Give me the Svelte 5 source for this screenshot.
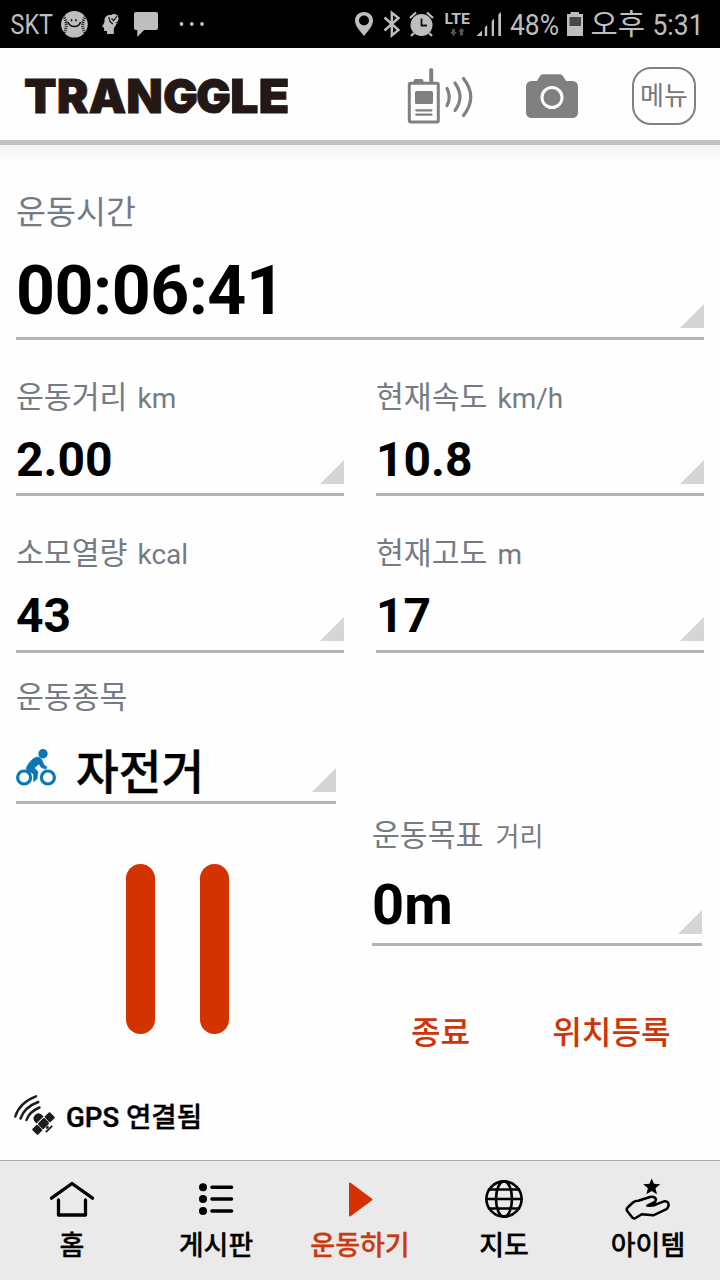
<script lang="ts">
	interface Metric {
		label: string;
		unit?: string;
		value: string;
		kind: string;
	}

	const time: Metric = { label: '운동시간', value: '00:06:41', kind: 'time' };
	const metrics: Metric[] = [
		{ label: '운동거리', unit: 'km', value: '2.00', kind: 'upper' },
		{ label: '현재속도', unit: 'km/h', value: '10.8', kind: 'upper' },
		{ label: '소모열량', unit: 'kcal', value: '43', kind: 'lower' },
		{ label: '현재고도', unit: 'm', value: '17', kind: 'lower' }
	];
	const sport: Metric = { label: '운동종목', value: '자전거', kind: 'sport' };
	const goal: Metric = { label: '운동목표', unit: '거리', value: '0m', kind: 'goal' };

	const tabs = [
		{ id: 'home', label: '홈' },
		{ id: 'board', label: '게시판' },
		{ id: 'workout', label: '운동하기' },
		{ id: 'map', label: '지도' },
		{ id: 'items', label: '아이템' }
	];
	let active = $state('workout');
	let paused = $state(false);
</script>

{#snippet metric(m: Metric)}
	<div class="metric {m.kind}">
		<div class="label">
			{m.label}{#if m.unit}<small>{m.unit}</small>{/if}
		</div>
		<div class="value-row">
			{#if m.kind === 'sport'}
				<svg class="bike" viewBox="0 0 40 40" width="40" height="40" fill="none" stroke="#0b78b5">
					<circle cx="8.1" cy="28.5" r="6.5" stroke-width="3.2" />
					<circle cx="31.9" cy="28.5" r="6.5" stroke-width="3.2" />
					<circle cx="27" cy="4.7" r="4.7" fill="#0b78b5" stroke="none" />
					<path d="M10 19.3C12.5 14 16 9.5 20 8.2C23.5 7.6 26 9.5 26.4 12L28.3 16.3L31 17.8L30 20.3L25.2 18.6L23 15L18.4 19L22 22.4L21 30L17.6 32.8L17.4 25L11.2 21.4Z" fill="#0b78b5" stroke="#0b78b5" stroke-width="0.5" />
				</svg>
			{/if}
			<strong>{m.value}</strong>
			<i class="corner"></i>
		</div>
	</div>
{/snippet}

<div class="screen">
	<div class="status">
		<svg viewBox="0 0 57 48" width="57" height="48">
			<text x="10.5" y="34" font-size="28" textLength="42.5" lengthAdjust="spacingAndGlyphs">SKT</text>
		</svg>
		<svg viewBox="57 0 36 48" width="36" height="48">
			<circle cx="74.4" cy="24.3" r="13.3" />
			<path d="M63.2 16Q69 24 64 33M85.8 16Q80 24 85 33" fill="none" stroke="#111" stroke-width="3" stroke-dasharray="1 1.1" />
			<path d="M68 22Q69.5 26.5 74.4 26.5Q79.3 26.5 80.5 22M71.5 19.3v2M76 19.3v2" fill="none" stroke="#111" stroke-width="1.6" />
		</svg>
		<svg viewBox="93 0 34 48" width="34" height="48">
			<path d="M102 27L104.5 22C104 17 107 14.5 111 15L114 23L117 23C116 26 114.2 26.5 113.8 29V34H107V31H104.2L104 27.5Z" />
			<circle cx="114" cy="18.5" r="4.6" />
			<path d="M109 17Q109 22 113 24M111.5 18.5L113.6 20.5L117.2 16" fill="none" stroke="#111" stroke-width="1.2" />
		</svg>
		<svg viewBox="127 0 44 48" width="44" height="48">
			<path d="M136 12H156Q158 12 158 14V28Q158 30 156 30H144L137.3 37V30H136Q134 30 134 28V14Q134 12 136 12Z" />
		</svg>
		<svg viewBox="171 0 40 48" width="40" height="48">
			<circle cx="181.5" cy="24" r="1.9" />
			<circle cx="191.8" cy="24" r="1.9" />
			<circle cx="202" cy="24" r="1.9" />
		</svg>
		<svg class="status-right" viewBox="345 0 33 48" width="33" height="48">
			<path fill-rule="evenodd" d="M364 12C369.5 12 373 16 373 20.5C373 26 368 31 364 36C360 31 355 26 355 20.5C355 16 358.5 12 364 12ZM364 15.5A5 5 0 1 0 364 25.5A5 5 0 1 0 364 15.5Z" />
		</svg>
		<svg viewBox="378 0 27 48" width="27" height="48">
			<path d="M384.5 17.5L398.5 30L391.8 35.5V12.8L398.5 18L384.5 30.5" fill="none" stroke="#bebebe" stroke-width="2.4" />
		</svg>
		<svg viewBox="405 0 34 48" width="34" height="48">
			<circle cx="421.5" cy="25" r="11" />
			<path d="M410 18L416 12.5M433 18L427 12.5M414 33L411 36M429 33L432 36" fill="none" stroke="#bebebe" stroke-width="2.3" />
			<path d="M421.5 18.5V25.5H427" fill="none" stroke="#111" stroke-width="1.8" />
		</svg>
		<svg viewBox="439 0 34 48" width="34" height="48">
			<text x="444.5" y="24.3" font-size="15.5" font-weight="700" textLength="25.5" lengthAdjust="spacingAndGlyphs">LTE</text>
			<path d="M452 29h3v3h1.7L453.5 36L450.3 32H452ZM460 35.5h3v-4h1.7L461.5 28L458.3 31.5H460Z" fill="#555" />
		</svg>
		<svg viewBox="473 0 34 48" width="34" height="48">
			<path d="M476.5 36L482 30.5V36ZM484.8 27.2L487.2 25V36H484.8ZM491.7 21L494 18.5V36H491.7ZM498.3 14.5L501 12V36H498.3Z" />
		</svg>
		<svg viewBox="507 0 55 48" width="55" height="48">
			<text x="510" y="34.8" font-size="29.5" textLength="49" lengthAdjust="spacingAndGlyphs">48%</text>
		</svg>
		<svg viewBox="562 0 26 48" width="26" height="48">
			<path d="M570.5 12H579V14H583V36H567V14H570.5Z" />
			<path d="M569.5 17H581V26H569.5Z" fill="#484848" />
		</svg>
		<svg viewBox="588 0 60 48" width="60" height="48">
			<text x="590.5" y="35" font-size="29" textLength="54.5" lengthAdjust="spacingAndGlyphs">오후</text>
		</svg>
		<svg viewBox="648 0 72 48" width="72" height="48">
			<text x="652.5" y="34.8" font-size="29.5" textLength="51" lengthAdjust="spacingAndGlyphs">5:31</text>
		</svg>
	</div>

	<header>
		<svg class="logo" viewBox="0 0 290 92" width="290" height="92" aria-label="TRANGGLE">
			<text y="65" font-size="47" lengthAdjust="spacingAndGlyphs" x="24" textLength="139">TRAN</text>
			<text y="65" font-size="47" lengthAdjust="spacingAndGlyphs" x="163" textLength="35">G</text>
			<path class="notch" d="M183.5 68L199 52V68Z" />
			<text y="65" font-size="47" lengthAdjust="spacingAndGlyphs" x="196" textLength="35">G</text>
			<path class="notch" d="M216.5 68L232 52V68Z" />
			<text y="65" font-size="47" lengthAdjust="spacingAndGlyphs" x="230" textLength="59.5">LE</text>
		</svg>
		<button aria-label="무전기">
			<svg viewBox="404 62 72 64" width="72" height="64" fill="none" stroke="#808080" stroke-linecap="round">
				<rect x="409.3" y="83.3" width="29" height="38.8" rx="1.5" stroke-width="3" />
				<path d="M415.5 81H421.5M431.2 70V82" stroke-width="4" />
				<rect x="415" y="91" width="18" height="13" rx="1.5" fill="#808080" stroke="none" />
				<path d="M416.3 110.3H431.5M416.3 114.7H431.5" stroke-width="2.2" />
				<path d="M447 88.5Q451.5 97 447 105.5M455 83Q465 97 455 110.5M463.5 78.5Q478 97 463.5 115.5" stroke-width="3.2" />
			</svg>
		</button>
		<button aria-label="카메라">
			<svg viewBox="526 62 52 64" width="52" height="64">
				<path d="M532 81H537L540 76Q541 74.3 543 74.3H560Q562 74.3 563 76L566 81H572Q578 81 578 87V112Q578 118 572 118H532Q526 118 526 112V87Q526 81 532 81Z" fill="#808080" />
				<circle cx="552" cy="97.5" r="10" fill="none" stroke="#fff" stroke-width="3" />
			</svg>
		</button>
		<button class="menu">메뉴</button>
	</header>

	<main>
		{@render metric(time)}
		<div class="grid">
			{#each metrics as m (m.label)}
				{@render metric(m)}
			{/each}
		</div>

		<div class="bottom">
			<div>
				{@render metric(sport)}
				<button class="pause" aria-label="일시정지" onclick={() => (paused = !paused)}>
					<i></i>
					<i></i>
				</button>
			</div>
			<div class="side">
				{@render metric(goal)}
				<div class="actions">
					<button>종료</button>
					<button>위치등록</button>
				</div>
			</div>
		</div>

		<div class="gps">
			<svg viewBox="0 0 40 40" width="40" height="40" fill="none" stroke="#1c1c1c" stroke-linecap="round">
				<path d="M1.3 21.5Q5.5 7.5 22 1.3M6.5 23.5Q10.5 12 24.3 7M12.5 25Q15 17 25.5 12.5" stroke-width="2.5" />
				<g transform="rotate(-45 29.5 28.5)" fill="#1c1c1c" stroke="none">
					<rect x="25" y="24.5" width="9" height="8" rx="1.5" />
					<rect x="17" y="24.5" width="7.4" height="8" rx="1" />
					<rect x="34.6" y="24.5" width="7.4" height="8" rx="1" />
					<rect x="28" y="33" width="3" height="2" />
					<rect x="25" y="35.4" width="9" height="1.8" />
					<path d="M24.5 23.5Q24 16.5 29.5 16.5Q35 16.5 34.5 23.5Z" />
				</g>
			</svg>
			<span>GPS 연결됨</span>
		</div>
	</main>

	<nav>
		{#each tabs as tab (tab.id)}
			<button class:active={active === tab.id} onclick={() => (active = tab.id)}>
				<svg viewBox="0 0 48 44" width="48" height="44" fill="none" stroke="currentColor" stroke-linecap="round">
					{#if tab.id === 'home'}
						<path d="M3.5 18.2L24 3.5L44.5 18.2M10.5 20V35H37.5V20" stroke-width="3.3" stroke-linejoin="round" />
					{:else if tab.id === 'board'}
						<path d="M20 7.3H39.5M20 19H39.5M20 31H39.5" stroke-width="3.6" />
						<g fill="currentColor" stroke="none">
							<circle cx="11" cy="7.3" r="4" />
							<circle cx="11" cy="19" r="4" />
							<circle cx="11" cy="31" r="4" />
						</g>
					{:else if tab.id === 'workout'}
						<path d="M14 3.5L35.5 19.5L14 35.5Z" fill="#d23300" stroke="#d23300" stroke-width="2" stroke-linejoin="round" />
					{:else if tab.id === 'map'}
						<g stroke-width="2.6">
							<circle cx="24" cy="19" r="17.6" />
							<ellipse cx="24" cy="19" rx="8" ry="17.6" />
							<path d="M6.4 19H41.6M9 9.5H39M9 28.5H39" />
						</g>
					{:else}
						<path d="M27.7 -1.6L30 3.8L36.2 4.3L31.5 8.3L33 14.3L27.7 11.1L22.4 14.3L23.9 8.3L19.2 4.3L25.4 3.8Z" fill="currentColor" stroke="none" />
						<path d="M3.6 27.5L9 22.5Q11 20.7 14.3 20.7L26 17Q31 16 32 19.5L31 22L23.3 25.6Q29 26.4 34 23.6L40 21.3Q44.5 21 44.6 24.5Q44.5 28 42 29.3L29.3 35.3L17.7 34.3L12 37.8Q9.5 39.6 7.5 36.5L3.2 31Q2 29 3.6 27.5Z" stroke-width="2.5" stroke-linejoin="round" />
					{/if}
				</svg>
				<span>{tab.label}</span>
			</button>
		{/each}
	</nav>
</div>

<style>
	:global(body) {
		margin: 0;
	}

	.screen {
		display: flex;
		flex-direction: column;
		width: 720px;
		height: 1280px;
		overflow: hidden;
		background: #fefefe;
		color: #000;
		font-family: Roboto, 'Noto Sans CJK KR', sans-serif;
	}

	button {
		padding: 0;
		border: 0;
		background: none;
		color: inherit;
		font: inherit;
	}

	svg {
		display: block;
		flex: none;
		overflow: visible;
	}

	.status {
		display: flex;
		flex: none;
		height: 48px;
		background: #000;
		fill: #bebebe;
	}

	.status-right {
		margin-left: auto;
	}

	header {
		display: flex;
		flex: none;
		align-items: center;
		height: 92px;
		border-bottom: 5px solid #c2c2c2;
	}

	.logo {
		margin-right: 114px;
		fill: #231815;
		stroke: #231815;
		stroke-width: 0.8;
		font-family: Inter, sans-serif;
		font-weight: 900;
	}

	.notch {
		fill: #fefefe;
		stroke: none;
	}

	header button + button {
		margin-left: 50px;
	}

	header button.menu {
		box-sizing: border-box;
		width: 64px;
		height: 58px;
		margin-top: 4px;
		margin-left: 54px;
		border: 2px solid #808080;
		border-radius: 19px;
		color: #777;
		font-size: 26px;
		line-height: 55px;
	}

	main {
		box-sizing: border-box;
		flex: 1;
		padding: 47px 16px 0;
		background: linear-gradient(#f3f3f3, #fefefe 16px);
	}

	.label {
		height: 40px;
		color: #747b84;
		font-size: 30.3px;
		line-height: 42px;
		white-space: nowrap;
	}

	.label small {
		margin-left: 10px;
		font-size: 28px;
	}

	.value-row {
		box-sizing: border-box;
		display: flex;
		align-items: center;
		height: 79px;
		padding-top: 9px;
		border-bottom: 3px solid #b4b4b4;
	}

	.value-row strong {
		flex: 1;
		font-size: 48px;
		line-height: 60px;
	}

	.corner {
		align-self: flex-end;
		width: 24px;
		height: 24px;
		margin-bottom: 9px;
		background: #d5d5d5;
		clip-path: polygon(100% 0, 100% 100%, 0 100%);
	}

	.time .label {
		font-size: 32.6px;
		line-height: 43px;
	}

	.time .value-row {
		height: 108px;
		padding-top: 13px;
	}

	.time strong {
		font-size: 68px;
		letter-spacing: -0.5px;
	}

	.grid {
		display: grid;
		grid-template-columns: 328px 328px;
		gap: 37px 32px;
		margin-top: 37px;
	}

	.lower .value-row {
		height: 80px;
		padding-top: 9px;
	}

	.bottom {
		display: grid;
		grid-template-columns: 320px 330px;
		gap: 36px;
		height: 400px;
		margin-top: 24px;
	}

	.sport .value-row {
		height: 87px;
		padding-top: 24px;
	}

	.bike {
		margin-right: 20px;
		margin-bottom: 5px;
	}

	.sport strong {
		padding-top: 4px;
		font-size: 46.5px;
		font-weight: 500;
		-webkit-text-stroke: 0.4px #000;
	}

	.pause {
		display: flex;
		gap: 45px;
		margin: 60px 0 0 110px;
	}

	.pause i {
		width: 29px;
		height: 170px;
		border-radius: 15px;
		background: #d23300;
	}

	.side {
		padding-top: 138px;
	}

	.goal .label small {
		margin-left: 12px;
		font-size: 26px;
	}

	.goal .value-row {
		height: 91px;
		padding-top: 11px;
	}

	.goal strong {
		font-size: 56px;
	}

	.actions {
		display: flex;
		gap: 82px;
		margin: 63px 0 0 39px;
		color: #cb3508;
		font-size: 32.2px;
		font-weight: 500;
		line-height: 49px;
		white-space: nowrap;
	}

	.gps {
		display: flex;
		align-items: center;
		gap: 12px;
		height: 40px;
		margin: 18px 0 0 -2px;
		font-size: 27.6px;
		font-weight: 500;
		-webkit-text-stroke: 0.4px #000;
	}

	nav {
		box-sizing: border-box;
		display: grid;
		flex: none;
		grid-template-columns: repeat(5, 1fr);
		height: 120px;
		border-top: 1px solid #aaa;
		background: #eaeaea;
	}

	nav button {
		display: flex;
		flex-direction: column;
		align-items: center;
		padding-top: 19px;
		font-size: 27px;
		font-weight: 500;
		line-height: 45px;
		white-space: nowrap;
	}

	nav span {
		-webkit-text-stroke: 0.3px currentColor;
	}

	nav button.active {
		color: #c93a10;
	}
</style>
